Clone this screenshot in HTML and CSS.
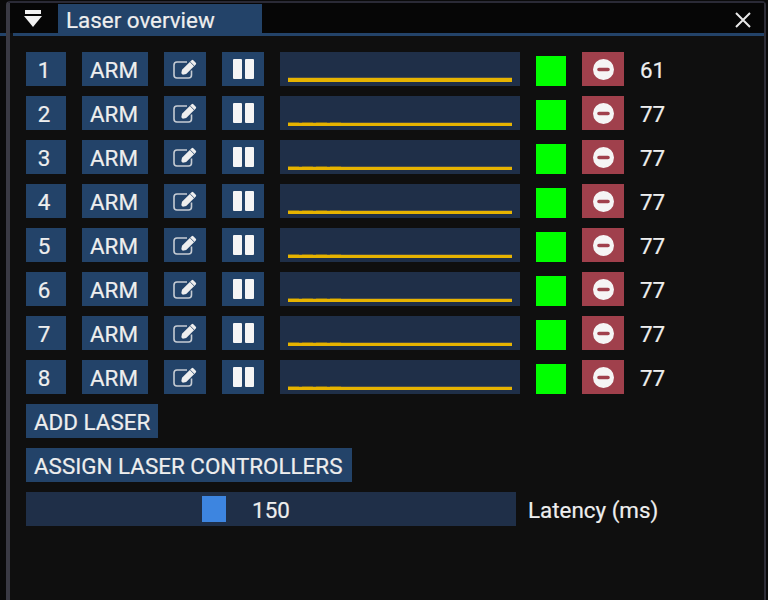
FILE: index.html
```html
<!DOCTYPE html>
<html lang="en">
<head>
    <meta charset="UTF-8">
    <meta name="viewport" content="width=device-width, initial-scale=1.0">
    <title>Laser overview</title>
    <link rel="stylesheet" href="styles.css">
</head>
<body>

<svg class="defs" width="0" height="0">
    <symbol id="edit" viewBox="0 0 25 20">
        <path d="M18.500 11.500v4.500a3 3 0 0 1-3 3H4a3 3 0 0 1-3-3V6a3 3 0 0 1 3-3h10" fill="none" stroke="currentColor" stroke-width="1.600" opacity="0.8"/>
        <path d="M8.300 14.200l.7-3.400L18.600 1.200a1.200 1.200 0 0 1 1.700 0l2.500 2.500a1.200 1.200 0 0 1 0 1.700L13.200 15l-3.400.7z" fill="currentColor"/>
        <path d="M17.200 3l3.800 3.800" stroke="#234369" stroke-width="0.800"/>
    </symbol>
    <symbol id="stop" viewBox="0 0 21 21">
        <path fill-rule="evenodd" d="M10.500 0a10.500 10.500 0 1 1 0 21a10.500 10.500 0 1 1 0-21zM6 8.700a1.800 1.800 0 0 0 0 3.600h9a1.800 1.800 0 0 0 0-3.600z" fill="currentColor"/>
    </symbol>
</svg>

<div class="window">
    <div class="titlebar">
        <div class="menu-btn"><span class="menu-bar"></span><span class="menu-arrow"></span></div>
        <div class="tab">Laser overview</div>
        <svg class="close" width="16" height="16" viewBox="0 0 16 16">
            <path d="M1 1l14 14M15 1L1 15" stroke="#e8e8e8" stroke-width="2"/>
        </svg>
    </div>
    <div class="title-line"></div>

    <div class="content">
        <div class="lasers" id="lasers"></div>

        <button class="btn wide add">ADD LASER</button>
        <button class="btn wide assign">ASSIGN LASER CONTROLLERS</button>

        <div class="latency">
            <div class="slider">
                <span class="grab"></span>
                <span class="slider-value">150</span>
            </div>
            <span class="latency-label">Latency (ms)</span>
        </div>
    </div>
</div>

<script>
    const values = [61, 77, 77, 77, 77, 77, 77, 77];
    const rows = values.map((value, i) => `
        <div class="laser">
            <button class="btn num">${i + 1}</button>
            <button class="btn arm">ARM</button>
            <button class="btn icon"><svg width="25" height="20"><use href="#edit"/></svg></button>
            <button class="btn icon pause"><span></span><span></span></button>
            <div class="plot ${i === 0 ? 'thick' : ''}">
                <div class="trace-noise"></div>
                <div class="trace"></div>
            </div>
            <div class="status"></div>
            <button class="btn icon remove"><svg width="21" height="21"><use href="#stop"/></svg></button>
            <span class="value">${value}</span>
        </div>`);
    document.getElementById('lasers').innerHTML = rows.join('');
</script>

</body>
</html>
```

FILE: styles.css
```css
* {
    margin: 0;
    padding: 0;
    box-sizing: border-box;
}
html, body {
    height: 100%;
    overflow: hidden;
}
body {
    font-family: Roboto, sans-serif;
    font-size: 22.4px;
    background: linear-gradient(#234369, #234369) 0 33px / 6px 3px no-repeat #0a0a0a;
    color: #eeeeee;
    -webkit-text-stroke: 0.2px;
    padding: 1px 2px 0 6px;
}
.defs {
    position: absolute;
}
.window {
    height: 100%;
    background-color: #0f0f0f;
    border-top: 2px solid #2a2a36;
    border-left: 4px solid #3a3a44;
    border-right: 2px solid #2e2e38;
    border-radius: 4px 4px 0 0;
}
.titlebar {
    display: flex;
    height: 30px;
    background-color: #060606;
}
.title-line {
    height: 3px;
    margin-left: 3px;
    background-color: #234369;
}
.menu-btn {
    width: 48px;
    padding: 7px 2px 0 0;
    display: flex;
    flex-direction: column;
    align-items: center;
}
.menu-bar {
    width: 16px;
    height: 4px;
    background-color: #f2f2f2;
}
.menu-arrow {
    margin-top: 2px;
    border-left: 9px solid transparent;
    border-right: 9px solid transparent;
    border-top: 11px solid #f2f2f2;
}
.tab {
    width: 204px;
    margin-top: 1px;
    padding: 2px 0 0 8px;
    background-color: #234369;
    line-height: 29px;
    overflow: hidden;
}
.close {
    margin: 9px 13px 0 auto;
}
.content {
    padding: 16px 16px 0 16px;
    display: flex;
    flex-direction: column;
    align-items: flex-start;
    gap: 10px;
}
.lasers {
    display: flex;
    flex-direction: column;
    gap: 10px;
}
.laser {
    display: flex;
    align-items: center;
    height: 34px;
}
.btn {
    height: 34px;
    padding-top: 2px;
    border: none;
    font-family: inherit;
    font-size: 22.4px;
    color: #eeeeee;
    background-color: #234369;
    display: flex;
    align-items: center;
    justify-content: center;
}
.num {
    width: 40px;
    padding-right: 4px;
}
.arm {
    width: 66px;
    margin-left: 16px;
    padding-right: 2px;
}
.icon {
    width: 42px;
    margin-left: 16px;
    padding: 0;
}
.pause {
    gap: 3px;
}
.pause span {
    width: 9px;
    height: 20px;
    background-color: #f5f5f5;
    border-radius: 1px;
}
.plot {
    width: 240px;
    height: 34px;
    margin-left: 16px;
    padding: 0 8px;
    background-color: #1f2f48;
    display: flex;
    flex-direction: column;
    justify-content: flex-end;
}
.trace-noise {
    height: 1px;
    background: repeating-linear-gradient(90deg, #7a6a20 0 11px, #4d4d45 11px 14px) 0 0 / 56px 1px no-repeat #4d4d45;
}
.trace {
    height: 3px;
    margin-bottom: 4px;
    background-color: #e6b300;
}
.thick .trace {
    height: 4px;
}
.thick .trace-noise {
    background: #4d4d45;
}
.status {
    width: 30px;
    height: 30px;
    margin: 4px 0 0 16px;
    background-color: #00ff00;
}
.remove {
    background-color: #a0404c;
    color: #f5f5f5;
}
.value {
    margin-left: 16px;
    padding-top: 2px;
}
.wide {
    justify-content: flex-start;
    padding-left: 8px;
}
.add {
    width: 132px;
}
.assign {
    width: 326px;
}
.latency {
    display: flex;
    gap: 12px;
}
.slider {
    position: relative;
    width: 490px;
    height: 34px;
    padding-top: 2px;
    background-color: #1f2f48;
    display: flex;
    align-items: center;
    justify-content: center;
}
.grab {
    position: absolute;
    left: 176px;
    top: 4px;
    width: 24px;
    height: 26px;
    background-color: #3d85e0;
}
.latency-label {
    line-height: 34px;
    padding-top: 1px;
}
```
